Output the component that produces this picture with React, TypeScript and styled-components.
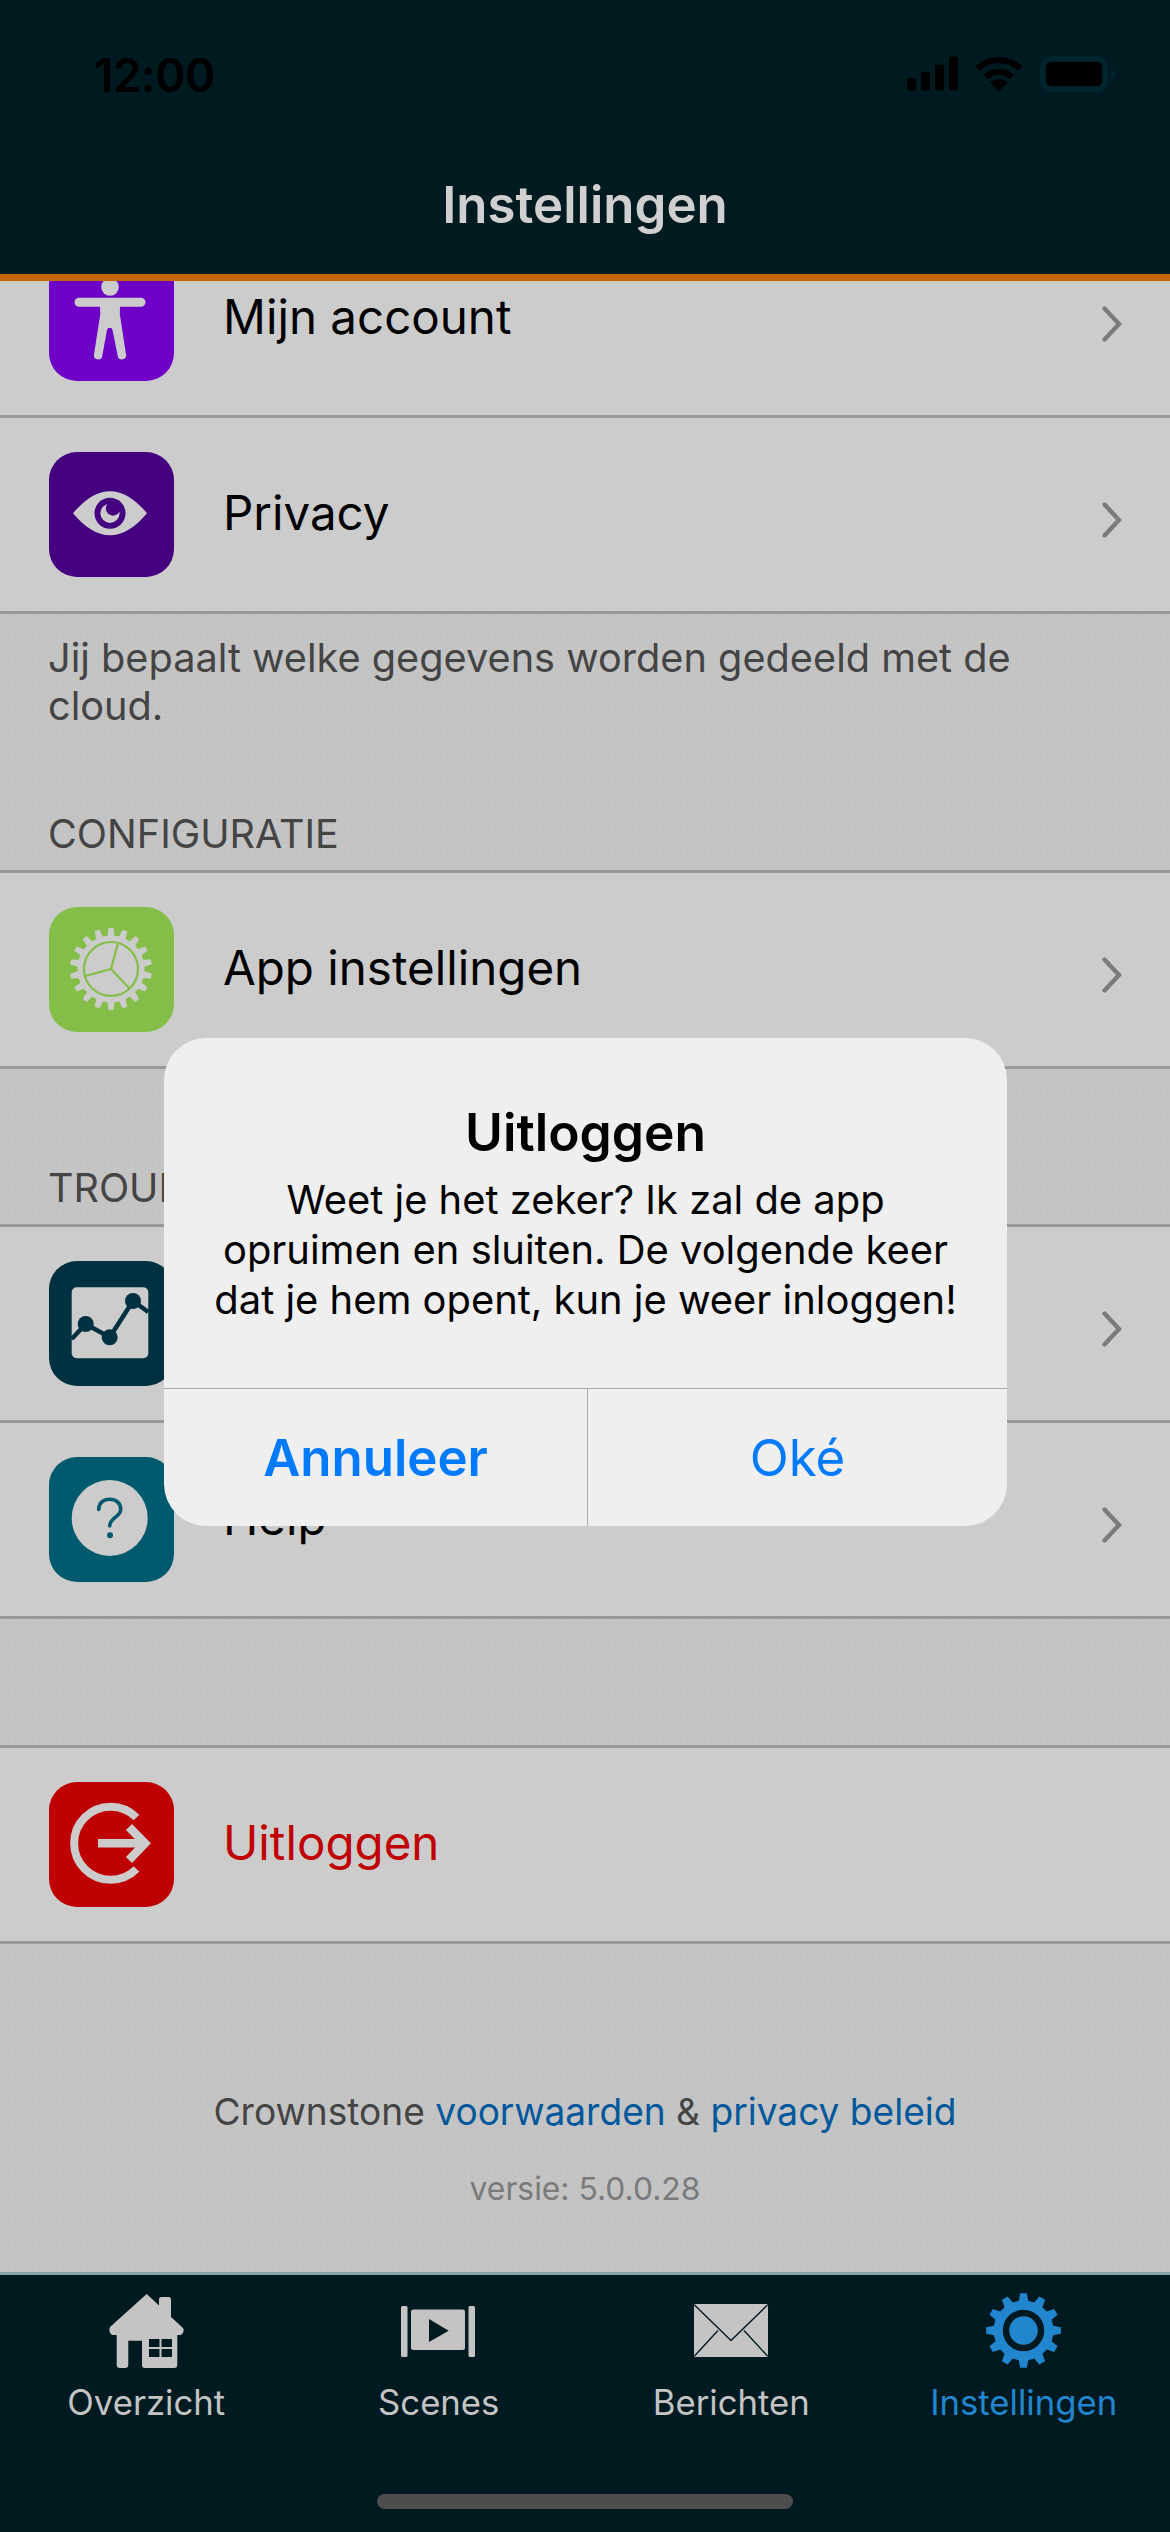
import * as React from 'react';
import styled, { createGlobalStyle } from 'styled-components';

const FONT = 'Inter, "Liberation Sans", sans-serif';
const LIGHT = '#cccccc';

const GlobalStyle = createGlobalStyle`
  html, body {
    margin: 0;
    padding: 0;
    background: #c4c4c4;
    font-family: ${FONT};
  }
`;

const Screen = styled.div`
  position: relative;
  width: 1170px;
  height: 2532px;
  display: flex;
  flex-direction: column;
  overflow: hidden;
  background-color: #c4c4c4;
  background-image: radial-gradient(#c1c1c1 1px, transparent 1.2px);
  background-size: 6px 6px;
`;

const Header = styled.header`
  flex: none;
  height: 274px;
  box-sizing: border-box;
  background: #001a22;
  position: relative;
  z-index: 1;
  display: flex;
  flex-direction: column;
`;

const OrangeLine = styled.div`
  flex: none;
  height: 7px;
  background: #c46600;
  position: relative;
  z-index: 1;
`;

const StatusBar = styled.div`
  height: 150px;
  box-sizing: border-box;
  padding: 50px 55px 0 94px;
  display: flex;
  justify-content: space-between;
  align-items: flex-start;
`;

const Clock = styled.span`
  font-size: 46px;
  line-height: 50px;
  font-weight: 600;
  letter-spacing: -0.5px;
  color: #000000;
`;

const StatusIcons = styled.div`
  display: flex;
  align-items: flex-start;
  gap: 17px;
  margin-top: 6px;
`;

const Title = styled.h1`
  margin: 25px 0 0;
  text-align: center;
  font-size: 51px;
  line-height: 60px;
  font-weight: 600;
  color: #d0d0d0;
`;

const ScrollArea = styled.main`
  flex: 1;
  min-height: 0;
  overflow: hidden;
`;

const ScrollContent = styled.div`
  margin-top: -59px;
`;

const Group = styled.section<{ $top?: boolean }>`
  border-top: ${(p) => (p.$top ? '3px solid #999999' : '0')};
`;

const Row = styled.div`
  height: 193px;
  border-bottom: 3px solid #999999;
  background: #cccccc;
  display: flex;
  align-items: center;
  padding: 0 48px 0 49px;
`;

const IconTile = styled.div<{ $color: string }>`
  flex: none;
  width: 125px;
  height: 125px;
  border-radius: 28px;
  background: ${(p) => p.$color};
  svg {
    display: block;
  }
`;

const RowLabel = styled.span<{ $danger?: boolean }>`
  flex: 1;
  margin-left: 49px;
  margin-top: -3px;
  font-size: 47.5px;
  line-height: 56px;
  color: ${(p) => (p.$danger ? '#c00000' : '#000000')};
`;

const Chevron = styled.svg`
  flex: none;
  margin-top: 10px;
`;

const Note = styled.p`
  margin: 0;
  padding: 20px 48px 0;
  font-size: 39.7px;
  line-height: 48px;
  color: #444444;
`;

const SectionTitle = styled.div<{ $height: number }>`
  height: ${(p) => p.$height}px;
  box-sizing: border-box;
  display: flex;
  align-items: flex-end;
  padding: 0 48px 16px;
  font-size: 39.5px;
  line-height: 40px;
  color: #444444;
`;

const Spacer = styled.div`
  height: 126px;
`;

const Footer = styled.footer`
  padding-top: 146px;
  text-align: center;
`;

const Legal = styled.div`
  font-size: 37.1px;
  line-height: 44px;
  color: #444444;
`;

const LegalLink = styled.span`
  color: #00589c;
`;

const Version = styled.div`
  margin-top: 33px;
  font-size: 31.8px;
  line-height: 44px;
  color: #7a7a7a;
`;

const TabBar = styled.nav`
  flex: none;
  height: 260px;
  box-sizing: border-box;
  background: #001a22;
  border-top: 3px solid #8aa3a8;
  display: flex;
  flex-direction: column;
  align-items: center;
  position: relative;
`;

const Tabs = styled.div`
  width: 100%;
  display: grid;
  grid-template-columns: repeat(4, 1fr);
  padding-top: 18px;
`;

const Tab = styled.div<{ $active?: boolean }>`
  display: flex;
  flex-direction: column;
  align-items: center;
  color: ${(p) => (p.$active ? '#2286cf' : '#c4c4c4')};
  svg {
    display: block;
  }
`;

const TabLabel = styled.span`
  margin-top: 14px;
  font-size: 34.7px;
  line-height: 40px;
`;

const HomeIndicator = styled.div`
  width: 416px;
  height: 15px;
  border-radius: 8px;
  background: #4d4d4d;
  margin-top: 72px;
`;

const Dialog = styled.div`
  position: absolute;
  left: 164px;
  top: 1038px;
  width: 843px;
  height: 488px;
  border-radius: 42px;
  background: #efefef;
  display: flex;
  flex-direction: column;
  overflow: hidden;
  z-index: 2;
`;

const DialogText = styled.div`
  flex: 1;
  padding-top: 66px;
  text-align: center;
`;

const DialogTitle = styled.div`
  font-size: 51.5px;
  line-height: 56px;
  font-weight: 600;
  color: #000000;
`;

const DialogBody = styled.div`
  margin-top: 15px;
  font-size: 39.9px;
  line-height: 50px;
  color: #000000;
  white-space: nowrap;
`;

const DialogActions = styled.div`
  flex: none;
  height: 138px;
  display: grid;
  grid-template-columns: 423px 1fr;
  border-top: 1px solid #a9a9a9;
  box-sizing: border-box;
`;

const DialogButton = styled.div<{ $strong?: boolean }>`
  display: flex;
  align-items: center;
  justify-content: center;
  font-size: 51px;
  font-weight: ${(p) => (p.$strong ? 600 : 400)};
  color: #007aff;
  & + & {
    border-left: 1px solid #a9a9a9;
  }
`;

function gearPath(cx: number, cy: number, outer: number, root: number, teeth: number) {
  const step = (Math.PI * 2) / teeth;
  const pts: string[] = [];
  for (let i = 0; i < teeth; i++) {
    const a = i * step - Math.PI / 2;
    const corners: [number, number][] = [
      [root, a - step * 0.3],
      [outer, a - step * 0.17],
      [outer, a + step * 0.17],
      [root, a + step * 0.3],
    ];
    corners.forEach(([r, t]) => {
      pts.push(`${(cx + r * Math.cos(t)).toFixed(2)} ${(cy + r * Math.sin(t)).toFixed(2)}`);
    });
  }
  return `M${pts.join('L')}Z`;
}

const TileSvg = ({ children }: { children: React.ReactNode }) => (
  <svg width="125" height="125" viewBox="0 0 125 125">
    {children}
  </svg>
);

const BodyIcon = () => (
  <TileSvg>
    <circle cx="61" cy="31" r="8.8" fill={LIGHT} />
    <path
      fill={LIGHT}
      d="M30 41.7H92a4.5 4.5 0 0 1 0 9H71L70.8 58L77 98.5a4.2 4.2 0 0 1-8.2 1.8L63.5 74a2.8 2.8 0 0 0-5.5 0L53.2 100.3a4.2 4.2 0 0 1-8.2-1.8L51.3 58L51 50.7H30a4.5 4.5 0 0 1 0-9Z"
    />
  </TileSvg>
);

const EyeIcon = ({ color }: { color: string }) => (
  <TileSvg>
    <path
      fill={LIGHT}
      d="M24 61.3C36 47 48 39.3 61 39.3S86 47 98 61.3C86 75.6 74 83.3 61 83.3S36 75.6 24 61.3Z"
    />
    <circle cx="61" cy="61.3" r="15.5" fill={color} />
    <circle cx="61" cy="61.3" r="9.6" fill={LIGHT} />
    <circle cx="64" cy="56.5" r="7.2" fill={color} />
  </TileSvg>
);

const GearTileIcon = ({ color }: { color: string }) => (
  <TileSvg>
    <path fill={LIGHT} d={gearPath(62, 62, 41, 33.5, 18)} />
    <circle cx="62" cy="62" r="27" fill={LIGHT} stroke={color} strokeWidth="2.2" />
    <path
      fill="none"
      stroke={color}
      strokeWidth="2.2"
      d="M62 62L69 36M62 62L36 69M62 62L80 81"
    />
  </TileSvg>
);

const GraphIcon = ({ color }: { color: string }) => (
  <TileSvg>
    <rect x="22.7" y="26.3" width="76.6" height="71" rx="5" fill={LIGHT} />
    <path
      fill="none"
      stroke={color}
      strokeWidth="4.5"
      d="M22.7 78L36.7 63L60.7 76.3L84 40L99.3 51"
    />
    <circle cx="36.7" cy="63" r="8" fill={color} />
    <circle cx="60.7" cy="76.3" r="8" fill={color} />
    <circle cx="84" cy="40" r="8" fill={color} />
  </TileSvg>
);

const HelpIcon = ({ color }: { color: string }) => (
  <TileSvg>
    <circle cx="60.7" cy="61" r="38" fill={LIGHT} />
    <path
      fill="none"
      stroke={color}
      strokeWidth="3.6"
      strokeLinecap="round"
      d="M49.7 52.5C49.7 46 54.5 42.3 60.7 42.3S71.7 46 71.7 52.5C71.7 60 60.7 60.5 60.7 69"
    />
    <circle cx="61" cy="78.3" r="3" fill={color} />
  </TileSvg>
);

const LogoutIcon = () => (
  <TileSvg>
    <path
      fill="none"
      stroke={LIGHT}
      strokeWidth="8"
      d="M87.5 35.5A36.5 36.5 0 1 0 87.5 87"
    />
    <path fill="none" stroke={LIGHT} strokeWidth="8.5" d="M49 61.3H92" />
    <path fill="none" stroke={LIGHT} strokeWidth="8.5" d="M80 45L96 61.3L80 78" />
  </TileSvg>
);

const RowChevron = () => (
  <Chevron width="20" height="36" viewBox="0 0 20 36">
    <path fill="none" stroke="#7b7b7b" strokeWidth="4.4" strokeLinecap="round" d="M2.5 2.5L17 18L2.5 33.5" />
  </Chevron>
);

const SignalIcon = () => (
  <svg width="51" height="35" viewBox="0 0 51 35">
    <rect x="0" y="22" width="9" height="12.5" rx="2.5" fill="#000" />
    <rect x="14" y="16" width="9" height="18.5" rx="2.5" fill="#000" />
    <rect x="28" y="8.5" width="9" height="26" rx="2.5" fill="#000" />
    <rect x="42" y="0.5" width="9" height="34" rx="2.5" fill="#000" />
  </svg>
);

const WifiIcon = () => (
  <svg width="48" height="35" viewBox="0 0 48 35">
    <path fill="none" stroke="#000" strokeWidth="6" d="M2.5 12.5C15 1 33 1 45.5 12.5" />
    <path fill="none" stroke="#000" strokeWidth="6" d="M11 21C18.5 14 29.5 14 37 21" />
    <path fill="#000" d="M24 35L15 26.5C20 22 28 22 33 26.5Z" />
  </svg>
);

const BatteryIcon = () => (
  <svg width="75" height="37" viewBox="0 0 75 37">
    <rect x="2.5" y="2.5" width="63" height="31" rx="10" fill="none" stroke="#00252f" strokeWidth="5" />
    <rect x="6" y="6" width="56" height="24" rx="5" fill="#000" />
    <path fill="#00252f" d="M71 12.5C73.500 13.500 75 15.500 75 18S73.500 22.500 71 23.500Z" />
  </svg>
);

const HouseIcon = () => (
  <svg width="75" height="75" viewBox="0 0 75 75">
    <path
      fill="currentColor"
      d="M37.7 1L50 12.500V6.500Q50 4 52.500 4H59.500Q62 4 62 6.500V24L74 35Q76 39 72 42H68.300V72Q68.300 75 65 75H36Q33 75 33 72V47.700H19.300V72Q19.300 75 16 75H11Q7.700 75 7.700 72V42H3Q-1 39 1 34Z"
    />
    <path
      fill="#001a22"
      d="M40 46H50.500V54H40ZM52.500 46H63V54H52.500ZM40 56H50.500V64H40ZM52.500 56H63V64H52.500Z"
    />
  </svg>
);

const ScenesIcon = () => (
  <svg width="75" height="75" viewBox="0 0 75 75">
    <rect x="0" y="13" width="6.500" height="51" rx="1.500" fill="currentColor" />
    <rect x="67.500" y="13" width="6.500" height="51" rx="1.500" fill="currentColor" />
    <rect x="10" y="16.500" width="54" height="40.500" rx="2.500" fill="currentColor" />
    <path fill="#001a22" d="M28 26V49L47.700 37.700Z" />
  </svg>
);

const MailIcon = () => (
  <svg width="75" height="75" viewBox="0 0 75 75">
    <rect x="0" y="11" width="74" height="53" rx="1.500" fill="currentColor" />
    <path
      fill="none"
      stroke="#001a22"
      strokeWidth="1.400"
      d="M0.500 12L37 47.500L73.500 12M0.500 63L24 37.500M73.500 63L50 37.500"
    />
  </svg>
);

const TabGearIcon = () => (
  <svg width="75" height="75" viewBox="0 0 75 75">
    <path fill="currentColor" d={gearPath(37.5, 37.5, 37.5, 30, 12)} />
    <circle cx="37.5" cy="37.5" r="17.5" fill="currentColor" stroke="#001a22" strokeWidth="6.5" />
  </svg>
);

export default function App() {
  return (
    <Screen>
      <GlobalStyle />
      <Header>
        <StatusBar>
          <Clock>12:00</Clock>
          <StatusIcons>
            <SignalIcon />
            <WifiIcon />
            <BatteryIcon />
          </StatusIcons>
        </StatusBar>
        <Title>Instellingen</Title>
      </Header>
      <OrangeLine />

      <ScrollArea>
        <ScrollContent>
          <Group>
            <Row>
              <IconTile $color="#6e00c8">
                <BodyIcon />
              </IconTile>
              <RowLabel>Mijn account</RowLabel>
              <RowChevron />
            </Row>
            <Row>
              <IconTile $color="#44007e">
                <EyeIcon color="#44007e" />
              </IconTile>
              <RowLabel>Privacy</RowLabel>
              <RowChevron />
            </Row>
          </Group>
          <Note>
            Jij bepaalt welke gegevens worden gedeeld met de
            <br />
            cloud.
          </Note>

          <SectionTitle $height={140}>CONFIGURATIE</SectionTitle>
          <Group $top>
            <Row>
              <IconTile $color="#84be48">
                <GearTileIcon color="#84be48" />
              </IconTile>
              <RowLabel>App instellingen</RowLabel>
              <RowChevron />
            </Row>
          </Group>

          <SectionTitle $height={155}>TROUBLESHOOTING</SectionTitle>
          <Group $top>
            <Row>
              <IconTile $color="#003140">
                <GraphIcon color="#003140" />
              </IconTile>
              <RowLabel />
              <RowChevron />
            </Row>
            <Row>
              <IconTile $color="#005a6e">
                <HelpIcon color="#005a6e" />
              </IconTile>
              <RowLabel>Help</RowLabel>
              <RowChevron />
            </Row>
          </Group>

          <Spacer />
          <Group $top>
            <Row>
              <IconTile $color="#be0000">
                <LogoutIcon />
              </IconTile>
              <RowLabel $danger>Uitloggen</RowLabel>
            </Row>
          </Group>

          <Footer>
            <Legal>
              Crownstone <LegalLink>voorwaarden</LegalLink> &amp; <LegalLink>privacy beleid</LegalLink>
            </Legal>
            <Version>versie: 5.0.0.28</Version>
          </Footer>
        </ScrollContent>
      </ScrollArea>

      <TabBar>
        <Tabs>
          <Tab>
            <HouseIcon />
            <TabLabel>Overzicht</TabLabel>
          </Tab>
          <Tab>
            <ScenesIcon />
            <TabLabel>Scenes</TabLabel>
          </Tab>
          <Tab>
            <MailIcon />
            <TabLabel>Berichten</TabLabel>
          </Tab>
          <Tab $active>
            <TabGearIcon />
            <TabLabel>Instellingen</TabLabel>
          </Tab>
        </Tabs>
        <HomeIndicator />
      </TabBar>

      <Dialog>
        <DialogText>
          <DialogTitle>Uitloggen</DialogTitle>
          <DialogBody>
            Weet je het zeker? Ik zal de app
            <br />
            opruimen en sluiten. De volgende keer
            <br />
            dat je hem opent, kun je weer inloggen!
          </DialogBody>
        </DialogText>
        <DialogActions>
          <DialogButton $strong>Annuleer</DialogButton>
          <DialogButton>Oké</DialogButton>
        </DialogActions>
      </Dialog>
    </Screen>
  );
}
